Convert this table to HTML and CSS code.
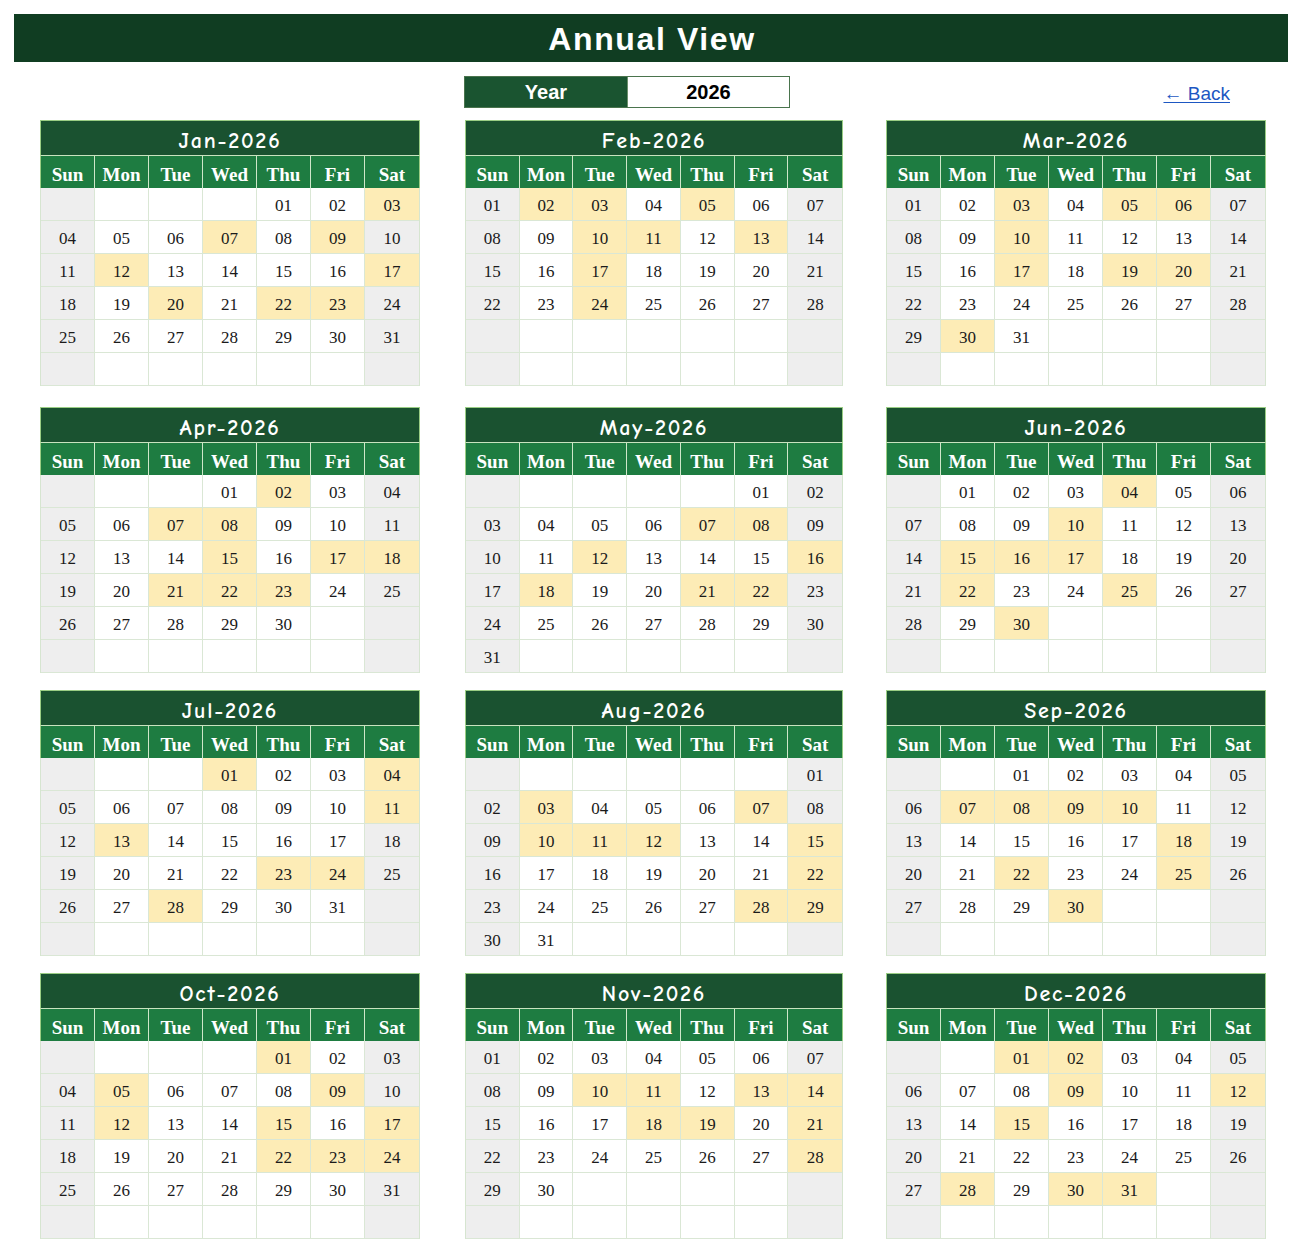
FILE: index.html
```html
<!DOCTYPE html>
<html lang="en">
<head>
<meta charset="utf-8">
<title>Annual View</title>
<link rel="stylesheet" href="styles.css">
</head>
<body>
<header class="banner"><h1 class="banner-title">Annual View</h1></header>
<div class="toolbar">
  <div class="year-box">
    <div class="year-label">Year</div>
    <div class="year-value">2026</div>
  </div>
  <a class="back-link" href="#">&larr; Back</a>
</div>
<main class="months" id="months"></main>
<script src="script.js"></script>
</body>
</html>
```

FILE: styles.css
```css
* { box-sizing: border-box; }
html, body { margin: 0; padding: 0; background: #ffffff; }
body { font-family: "Liberation Sans", Arial, sans-serif; width: 1302px; }

.banner {
  margin: 14px 14px 0;
  height: 48px;
  background: #103d22;
  display: flex;
  align-items: center;
  justify-content: center;
}
.banner-title {
  margin: 0;
  color: #ffffff;
  font-family: "Liberation Sans", Arial, sans-serif;
  font-weight: bold;
  font-size: 32px;
  letter-spacing: 1.6px;
  line-height: 1;
  padding-left: 2px;
  padding-top: 2px;
}

.toolbar {
  display: grid;
  grid-template-columns: repeat(3, 380px);
  column-gap: 43px;
  padding-left: 40px;
  margin-top: 14px;
  height: 32px;
  align-items: center;
}
.year-box {
  grid-column: 2;
  margin-left: 1px;
  width: 326px;
  height: 32px;
  display: flex;
  border: 1.5px solid #4a744d;
}
.year-label {
  width: 162px;
  background: #1a5430;
  color: #ffffff;
  font-weight: bold;
  font-size: 20px;
  display: flex;
  align-items: center;
  justify-content: center;
}
.year-value {
  flex: 1;
  background: #ffffff;
  color: #000000;
  font-weight: bold;
  font-size: 20px;
  display: flex;
  align-items: center;
  justify-content: center;
  border-left: 1px solid #6b8f6b;
}
.back-link {
  grid-column: 3;
  justify-self: end;
  margin-right: 36px;
  margin-top: 4px;
  color: #1d57c2;
  font-size: 19px;
  text-decoration: underline;
  text-underline-offset: 2px;
}

.months {
  display: grid;
  grid-template-columns: repeat(3, 380px);
  column-gap: 43px;
  row-gap: 17px;
  padding-left: 40px;
  margin-top: 12px;
}
.cal:nth-child(-n+3) { margin-bottom: 4px; }

.cal { width: 380px; }
.cal:nth-child(3n+2) { margin-left: 2px; width: 378px; }
.cal-title {
  height: 36px;
  background: #1a5230;
  border: 1px solid #9acd84;
  border-bottom: 1px solid #c9e3bf;
  color: #ffffff;
  font-family: "Comic Sans MS", "Comic Neue", "Lato", "Open Sans", sans-serif;
  font-weight: bold;
  font-size: 22px;
  letter-spacing: 1.8px;
  display: flex;
  align-items: center;
  justify-content: center;
  padding-top: 5px;
}
.cal-week {
  display: grid;
  grid-template-columns: repeat(7, 1fr);
  background: #1e7c41;
  border-left: 1px solid #9acd84;
  border-right: 1px solid #9acd84;
  height: 32px;
}
.wd {
  color: #ffffff;
  font-family: "Liberation Serif", "Times New Roman", serif;
  font-weight: bold;
  font-size: 19px;
  display: flex;
  align-items: center;
  justify-content: center;
  padding-top: 6px;
  border-right: 1.5px solid #cfe7c9;
}
.wd:last-child { border-right: none; }

.cal-days {
  display: grid;
  grid-template-columns: repeat(7, 1fr);
  border-left: 1px solid #d6e5d0;
  border-right: 1px solid #d6e5d0;
}
.day {
  height: 33px;
  border-right: 1px solid #dae7d5;
  border-bottom: 1px solid #dae7d5;
  background: #ffffff;
  color: #1a1a1a;
  font-family: "Liberation Serif", "Times New Roman", serif;
  font-size: 17px;
  display: flex;
  align-items: center;
  justify-content: center;
  padding-top: 4px;
}
.day:nth-child(7n) { border-right: none; }
.day.weekend { background: #eeeeee; }
.day.marked { background: #fdecb6; }
```

FILE: script.js
```js
var months = [
  { name: "Jan", start: 4, days: 31, marked: [3, 7, 9, 12, 17, 20, 22, 23] },
  { name: "Feb", start: 0, days: 28, marked: [2, 3, 5, 10, 11, 13, 17, 24] },
  { name: "Mar", start: 0, days: 31, marked: [3, 5, 6, 10, 17, 19, 20, 30] },
  { name: "Apr", start: 3, days: 30, marked: [2, 7, 8, 15, 17, 18, 21, 22, 23] },
  { name: "May", start: 5, days: 31, marked: [7, 8, 12, 16, 18, 21, 22] },
  { name: "Jun", start: 1, days: 30, marked: [4, 10, 15, 16, 17, 22, 25, 30] },
  { name: "Jul", start: 3, days: 31, marked: [1, 4, 11, 13, 23, 24, 28] },
  { name: "Aug", start: 6, days: 31, marked: [3, 7, 10, 11, 12, 15, 22, 28, 29] },
  { name: "Sep", start: 2, days: 30, marked: [7, 8, 9, 10, 18, 22, 25, 30] },
  { name: "Oct", start: 4, days: 31, marked: [1, 5, 9, 12, 15, 17, 22, 23, 24] },
  { name: "Nov", start: 0, days: 30, marked: [10, 11, 13, 14, 18, 19, 21, 28] },
  { name: "Dec", start: 2, days: 31, marked: [1, 2, 9, 12, 15, 28, 30, 31] }
];
var weekdays = ["Sun", "Mon", "Tue", "Wed", "Thu", "Fri", "Sat"];
var host = document.getElementById("months");

months.forEach(function (m) {
  var cal = document.createElement("section");
  cal.className = "cal";

  var title = document.createElement("div");
  title.className = "cal-title";
  title.textContent = m.name + "-2026";
  cal.appendChild(title);

  var week = document.createElement("div");
  week.className = "cal-week";
  weekdays.forEach(function (w) {
    var c = document.createElement("div");
    c.className = "wd";
    c.textContent = w;
    week.appendChild(c);
  });
  cal.appendChild(week);

  var grid = document.createElement("div");
  grid.className = "cal-days";
  for (var i = 0; i < 42; i++) {
    var col = i % 7;
    var d = i - m.start + 1;
    var cell = document.createElement("div");
    var cls = "day";
    if (col === 0 || col === 6) cls += " weekend";
    if (d >= 1 && d <= m.days) {
      cell.textContent = (d < 10 ? "0" : "") + d;
      if (m.marked.indexOf(d) !== -1) cls += " marked";
    }
    cell.className = cls;
    grid.appendChild(cell);
  }
  cal.appendChild(grid);
  host.appendChild(cal);
});
```
